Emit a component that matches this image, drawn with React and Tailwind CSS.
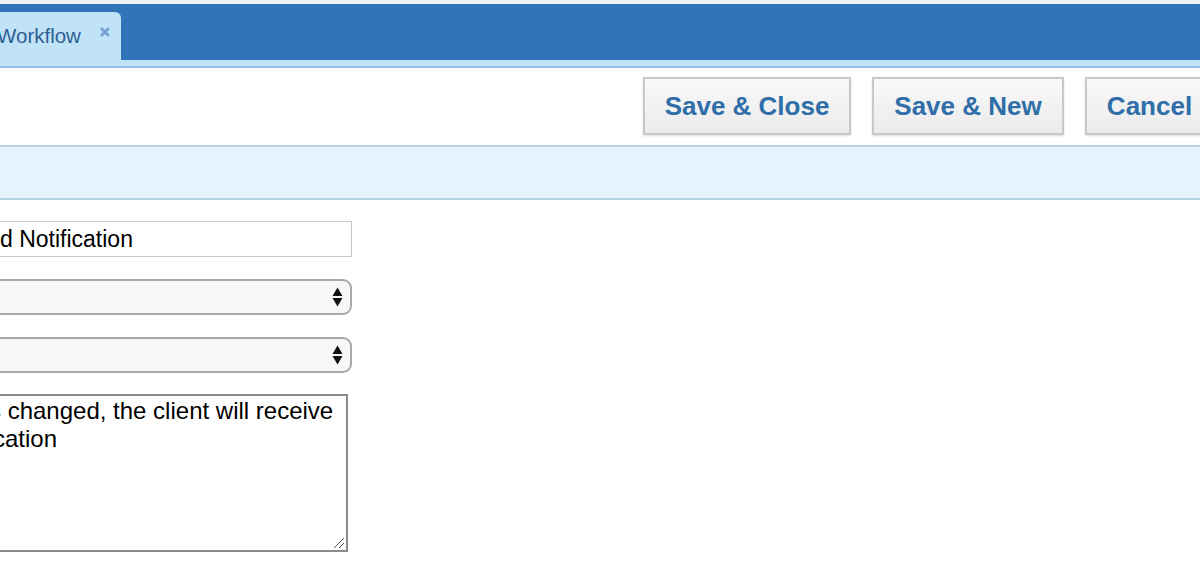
import React from 'react';

function ToolButton({ label, width }) {
  return (
    <button
      className={`h-[58px] ${width} shrink-0 bg-gradient-to-b from-[#f9f9f9] to-[#ebebeb] border-2 border-[#c9c9c9] shadow-[0_1px_2px_rgba(0,0,0,0.15)] text-[#2f6ea8] text-[26px] font-bold`}
      style={{ fontFamily: '"Liberation Sans", Arial, sans-serif' }}
    >
      {label}
    </button>
  );
}

function SelectBox() {
  return (
    <div className="h-[36px] w-[360px] ml-[-8px] bg-[#f7f7f7] border-2 border-[#a8a8a8] rounded-r-[9px] flex items-center justify-end pr-[7px]">
      <svg viewBox="0 0 11 22" className="w-[11px] h-[22px]">
        <path d="M5.5 1.5L10.5 10H0.5Z" fill="#111" />
        <path d="M5.5 20.5L10.5 12H0.5Z" fill="#111" />
      </svg>
    </div>
  );
}

export default function App() {
  return (
    <div
      className="w-[1200px] h-[580px] bg-white overflow-hidden flex flex-col"
      style={{ fontFamily: '"Liberation Sans", Arial, sans-serif' }}
    >
      {/* Tab strip */}
      <div className="h-[4px] bg-[#f2f2f2]" />
      <div className="h-[56px] bg-[#3075b8] flex items-end">
        <div className="h-[48px] w-[121px] bg-[#c1e3f8] rounded-tr-[6px] flex items-start pt-[12px]">
          <span className="text-[20.5px] leading-[24px] text-[#2d5e93] ml-[-3px] whitespace-nowrap">Workflow</span>
          <svg viewBox="0 0 12 12" className="w-[12px] h-[12px] ml-[18px] mt-[2px] shrink-0">
            <path d="M2 2L10 10M10 2L2 10" stroke="#76a3cf" strokeWidth="3" />
          </svg>
        </div>
      </div>
      <div className="h-[6px] bg-[#c1e3f8]" />
      <div className="h-[2px] bg-[#96c0ea]" />

      {/* Toolbar */}
      <div className="h-[77px] flex items-start justify-end gap-[21px] pt-[9px] mr-[-14px]">
        <ToolButton label="Save & Close" width="w-[208px]" />
        <ToolButton label="Save & New" width="w-[192px]" />
        <ToolButton label="Cancel" width="w-[129px]" />
      </div>

      {/* Info bar */}
      <div className="h-[55px] bg-[#e6f3fc] border-y-2 border-[#b6d3e3]" />

      {/* Form */}
      <div className="flex flex-col pt-[21px]">
        <div className="h-[36px] w-[360px] ml-[-8px] border border-[#c6c6c6] flex items-center pl-[7px]">
          <span className="text-[23px] leading-none text-black">d Notification</span>
        </div>
        <div className="mt-[22px]">
          <SelectBox />
        </div>
        <div className="mt-[22px]">
          <SelectBox />
        </div>
        <div className="mt-[21px] relative h-[158px] w-[356px] ml-[-8px] border-2 border-[#8b8b8b] bg-white pt-[1px] text-[24px] leading-[28px] text-black whitespace-pre">
          <div className="ml-[-5px]">s changed, the client will receive</div>
          <div className="ml-[-1px]">cation</div>
          <svg viewBox="0 0 12 12" className="absolute right-[1px] bottom-[1px] w-[12px] h-[12px]">
            <path d="M1 11L11 1M6 11L11 6" stroke="#555" strokeWidth="1" />
          </svg>
        </div>
      </div>
    </div>
  );
}
